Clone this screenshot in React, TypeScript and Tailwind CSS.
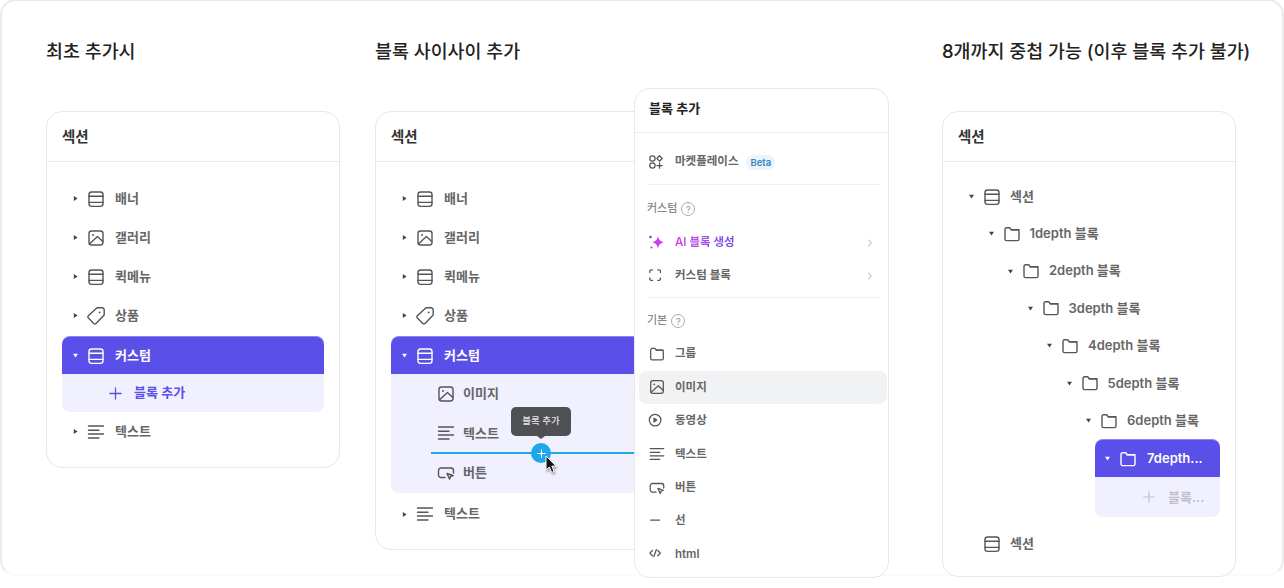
import type { ReactNode } from "react";
import { ChevronRight, Plus } from "lucide-react";

const FONT = "font-['Inter','Noto_Sans_CJK_KR',sans-serif]";

const Caret = ({ open, white }: { open?: boolean; white?: boolean }) => (
  <svg width="5" height="5" viewBox="0 0 6 6" className={white ? "fill-white" : "fill-[#444]"}>
    {open ? <path d="M0 1h6L3 5.5z" /> : <path d="M1 0v6l4.5-3z" />}
  </svg>
);

const Ico = ({ children, size = 18, className = "" }: { children: ReactNode; size?: number; className?: string }) => (
  <svg width={size} height={size} viewBox="0 0 18 18" fill="none" stroke="currentColor" strokeWidth="1.4" strokeLinecap="round" strokeLinejoin="round" className={`shrink-0 ${className}`}>
    {children}
  </svg>
);

const BannerIcon = () => (
  <Ico>
    <rect x="2" y="2" width="14" height="14.4" rx="2.6" />
    <path d="M2 6.2h14M2 12.4h14" />
  </Ico>
);
const ImageIcon = () => (
  <Ico>
    <rect x="2" y="2" width="14" height="14" rx="2.4" />
    <circle cx="6" cy="6" r="1" fill="currentColor" stroke="none" />
    <path d="M2.4 15l8-7.4 5.4 5" />
  </Ico>
);
const TagIcon = () => (
  <Ico>
    <path d="M10 .8h5.2A2 2 0 0 1 17.2 2.8V8L9 16.4a1.6 1.6 0 0 1-2.2 0L1.4 11a1.6 1.6 0 0 1 0-2.2z" />
    <circle cx="12.6" cy="5.4" r=".9" fill="currentColor" stroke="none" />
  </Ico>
);
const TextIcon = () => (
  <Ico>
    <path d="M1.5 3h15M1.5 7.2h10.5M1.5 11h15M1.5 15h10.5" />
  </Ico>
);
const ButtonIcon = () => (
  <Ico>
    <path d="M8 13.5H4a2.5 2.5 0 0 1-2.5-2.5V6.5A2.5 2.5 0 0 1 4 4h10a2.5 2.5 0 0 1 2.5 2.5V9" />
    <path d="M10 9.5l6 2-2.4 1-1 2.6z" />
  </Ico>
);
const FolderIcon = () => (
  <Ico>
    <path d="M2 14V4.4A1.6 1.6 0 0 1 3.6 2.8h2.6c.6 0 1 .3 1.3.8l.7 1.2h6.2A1.6 1.6 0 0 1 16 6.4V14a1.6 1.6 0 0 1-1.6 1.6H3.6A1.6 1.6 0 0 1 2 14z" />
    <path d="M8.2 4.8H16" />
  </Ico>
);

const Row = ({ icon, label, className = "" }: { icon: ReactNode; label: string; className?: string }) => (
  <div className={`flex h-[39px] items-center pl-[11px] text-[13px] font-semibold text-[#666] ${className}`}>
    <Caret />
    <span className="ml-[9px] flex w-[25px] text-[#555]">{icon}</span>
    <span className="ml-[3px]">{label}</span>
  </div>
);

const Card = ({ children, className = "" }: { children: ReactNode; className?: string }) => (
  <div className={`flex w-[294px] flex-col rounded-2xl border border-[#e8e8e8] bg-white ${className}`}>
    <div className="flex h-[50px] shrink-0 items-center border-b border-[#e8e8e8] px-[15px] text-[14.5px] font-semibold text-[#333]">섹션</div>
    {children}
  </div>
);

const ActiveRow = ({ label }: { label: string }) => (
  <div className="mt-[1px] flex h-[38px] items-center rounded-t-lg border-t border-[#8f84f5] bg-[#5b4fe9] pl-[11px] text-[13px] font-semibold text-white">
    <Caret open white />
    <span className="ml-[9px] flex w-[25px]"><BannerIcon /></span>
    <span className="ml-[3px]">{label}</span>
  </div>
);

const ChildRow = ({ icon, label }: { icon: ReactNode; label: string }) => (
  <div className="flex h-[39.5px] items-center pl-[46px] text-[13px] font-semibold text-[#666]">
    <span className="flex w-[26px] text-[#555]">{icon}</span>
    {label}
  </div>
);

const DepthRow = ({ depth }: { depth: number }) => (
  <div className="flex h-[37.4px] items-center text-[13px] font-semibold text-[#666]">
    <span className="shrink-0" style={{ width: depth * 19.5 }} />
    <Caret open />
    <span className="ml-[9px] flex w-[25px] text-[#555]"><FolderIcon /></span>
    <span className="ml-[2px] whitespace-nowrap">{depth}depth 블록</span>
  </div>
);

const Help = () => (
  <span className="ml-1 flex h-[14px] w-[14px] items-center justify-center rounded-full border border-[#aaa] text-[9px] font-medium text-[#999]">?</span>
);

const MenuRow = ({ icon, label, active, arrow, className = "h-[33.4px]" }: { icon: ReactNode; label: string; active?: boolean; arrow?: boolean; className?: string }) => (
  <div className={`flex items-center rounded-lg pl-[9px] pr-[11px] text-[11.5px] font-semibold ${active ? "bg-[#f1f2f4]" : ""} text-[#666] ${className}`}>
    <span className="flex w-[27px] text-[#555]">{icon}</span>
    <span>{label}</span>
    {arrow && <ChevronRight size={12} className="ml-auto text-[#aaa]" />}
  </div>
);

const Menu = () => (
  <div className="absolute left-[634px] top-[88px] flex h-[490px] w-[255px] flex-col rounded-2xl border border-[#e8e8e8] bg-white">
    <div className="flex h-[44px] shrink-0 items-center border-b border-[#f0f0f0] px-[14px] pb-[4px] text-[13px] font-semibold text-[#222]">블록 추가</div>
    <div className="ml-[4px] mr-[1px] flex flex-col">
      <div className="ml-[9px] mr-[7px] flex h-[52px] items-center border-b border-[#f0f0f0] pt-[7px] text-[11.5px] font-semibold text-[#666]">
        <span className="flex w-[27px] text-[#555]">
          <Ico size={16}>
            <circle cx="5" cy="5" r="3" />
            <path d="M13 2l3 3-3 3-3-3z" />
            <circle cx="5" cy="13" r="3" />
            <path d="M13 10v6M10 13h6" />
          </Ico>
        </span>
        마켓플레이스
        <span className="ml-2 rounded-full bg-[#eaf4fc] px-[4px] py-[1px] text-[9.5px] font-semibold leading-[13px] text-[#3d82b8]">Beta</span>
      </div>
      <div className="ml-[8px] flex h-[41.3px] items-end pb-[10px] text-[11px] font-medium text-[#888]">커스텀<Help /></div>
      <div className="flex h-[33px] items-center pl-[9px] pr-[11px] text-[11.5px] font-semibold">
        <span className="flex w-[27px]">
          <svg width="17" height="17" viewBox="0 0 17 17">
            <path d="M10 2c.7 3.6 2 5 5.6 6.2C12 9.400 10.700 10.800 10 14.400 9.300 10.800 8 9.400 4.400 8.200 8 7 9.300 5.600 10 2z" fill="#cb3fe6" />
            <circle cx="2.500" cy="3" r="1.300" fill="#5b4fe9" />
            <circle cx="3.500" cy="13.500" r="1.100" fill="#9a3fe6" />
          </svg>
        </span>
        <span className="bg-gradient-to-r from-[#d63fe6] to-[#6a4fe9] bg-clip-text text-transparent">AI 블록 생성</span>
        <ChevronRight size={12} className="ml-auto text-[#aaa]" />
      </div>
      <MenuRow
        arrow
        label="커스텀 블록"
        className="h-[33px]"
        icon={
          <Ico size={16}>
            <path d="M2 5V3.600A1.600 1.600 0 0 1 3.600 2H5M11 2h1.400A1.600 1.600 0 0 1 14 3.600V5M14 11v1.400a1.600 1.600 0 0 1-1.600 1.600H11M5 14H3.600A1.600 1.600 0 0 1 2 12.400V11" />
          </Ico>
        }
      />
      <div className="ml-[9px] mr-[7px] mt-[5px] border-b border-[#f0f0f0]" />
      <div className="ml-[8px] flex h-[39px] items-end pb-[9px] text-[11px] font-medium text-[#888]">기본<Help /></div>
      <MenuRow label="그룹" icon={<span className="flex scale-90"><FolderIcon /></span>} />
      <MenuRow label="이미지" active icon={<span className="flex scale-90"><ImageIcon /></span>} />
      <MenuRow
        label="동영상"
        icon={
          <Ico size={16}>
            <circle cx="8" cy="8" r="6.500" />
            <path d="M6.800 5.800l3 2.200-3 2.200z" fill="currentColor" />
          </Ico>
        }
      />
      <MenuRow label="텍스트" icon={<span className="flex scale-90"><TextIcon /></span>} />
      <MenuRow label="버튼" icon={<span className="flex scale-90"><ButtonIcon /></span>} />
      <MenuRow
        label="선"
        icon={
          <Ico size={16}>
            <path d="M3 8h10" />
          </Ico>
        }
      />
      <MenuRow
        label="html"
        icon={
          <Ico size={16}>
            <path d="M5 5L2 8l3 3M11 5l3 3-3 3M9.400 4L6.600 12" />
          </Ico>
        }
      />
    </div>
  </div>
);

const Cursor = () => (
  <svg width="14" height="20" viewBox="0 0 14 20" className="absolute left-[545px] top-[455px] drop-shadow-[1px_2px_1px_rgba(0,0,0,0.35)]">
    <path d="M1 1v14l3.400-3 2.300 5.400 2.400-1-2.300-5.300H11z" fill="#111" stroke="#fff" strokeWidth="1" />
  </svg>
);

export default function App() {
  return (
    <div className={`relative h-[588px] w-[1284px] overflow-hidden bg-white ${FONT}`}>
      <div className="absolute bottom-[12px] left-0 right-0 top-[-1px] rounded-2xl border-2 border-[#ebebeb] border-b-[#fafafa]" />
      <div className="relative flex pl-[46px] pt-[39px]">
        <section className="w-[329px]">
          <h2 className="mb-[48px] h-[24px] text-[18.4px] font-medium leading-6 text-[#222]">최초 추가시</h2>
          <Card className="h-[357px]">
            <div className="flex flex-col px-[15px] pt-[17px]">
              <Row icon={<BannerIcon />} label="배너" />
              <Row icon={<ImageIcon />} label="갤러리" />
              <Row icon={<BannerIcon />} label="퀵메뉴" />
              <Row icon={<TagIcon />} label="상품" />
              <ActiveRow label="커스텀" />
              <div className="flex h-[38px] items-center rounded-b-lg bg-[#f1f0fe] pl-[44px] text-[13px] font-semibold text-[#5b4fe9]">
                <Plus size={19} strokeWidth={1.6} className="mr-[9px]" />
                블록 추가
              </div>
              <Row icon={<TextIcon />} label="텍스트" />
            </div>
          </Card>
        </section>

        <section className="w-[567px]">
          <h2 className="mb-[48px] h-[24px] text-[18.4px] font-medium leading-6 text-[#222]">블록 사이사이 추가</h2>
          <Card className="h-[439px]">
            <div className="flex flex-col px-[15px] pt-[17px]">
              <Row icon={<BannerIcon />} label="배너" />
              <Row icon={<ImageIcon />} label="갤러리" />
              <Row icon={<BannerIcon />} label="퀵메뉴" />
              <Row icon={<TagIcon />} label="상품" />
              <ActiveRow label="커스텀" />
              <div className="rounded-b-lg bg-[#f1f0fe]">
                <ChildRow icon={<ImageIcon />} label="이미지" />
                <ChildRow icon={<TextIcon />} label="텍스트" />
                <ChildRow icon={<ButtonIcon />} label="버튼" />
              </div>
              <Row icon={<TextIcon />} label="텍스트" className="mt-[2px]" />
            </div>
          </Card>
        </section>

        <section className="w-[320px]">
          <h2 className="mb-[48px] h-[24px] whitespace-nowrap text-[18.4px] font-medium leading-6 text-[#222]">8개까지 중첩 가능 (이후 블록 추가 불가)</h2>
          <Card className="h-[466px]">
            <div className="flex flex-col px-[15px] pt-[16px]">
              <div className="flex h-[37px] items-center pl-[11px] text-[13px] font-semibold text-[#666]">
                <Caret open />
                <span className="ml-[9px] flex w-[25px] text-[#555]"><BannerIcon /></span>
                <span className="ml-[2px]">섹션</span>
              </div>
              {[1, 2, 3, 4, 5, 6].map((d) => (
                <div key={d} className="pl-[11px]">
                  <DepthRow depth={d} />
                </div>
              ))}
              <div className="ml-[137px] flex flex-col">
                <div className="flex h-[38px] items-center rounded-t-lg border-t border-[#8f84f5] bg-[#5b4fe9] pl-[10px] text-[13px] font-semibold text-white">
                  <Caret open white />
                  <span className="ml-[9px] flex w-[26px]"><FolderIcon /></span>
                  <span className="ml-[2px]">7depth...</span>
                </div>
                <div className="flex h-[40px] items-center rounded-b-lg bg-[#f1f0fe] pl-[45px] text-[13px] font-semibold text-[#c0c0c8]">
                  <Plus size={18} strokeWidth={1.6} className="mr-[10px]" />
                  블록...
                </div>
              </div>
              <div className="mt-[7px] flex h-[39px] items-center pl-[25px] text-[13px] font-semibold text-[#666]">
                <span className="flex w-[25px] text-[#555]"><BannerIcon /></span>
                <span className="ml-[2px]">섹션</span>
              </div>
            </div>
          </Card>
        </section>
      </div>

      {/* insert line + tooltip over the second card */}
      <div className="absolute left-[431px] top-[452px] h-[2px] w-[210px] bg-[#1ea7ea]" />
      <div className="absolute left-[531px] top-[443px] flex h-5 w-5 items-center justify-center rounded-full bg-[#1ea7ea] text-white">
        <Plus size={13} />
      </div>
      <div className="absolute left-[511px] top-[407px] flex h-[29px] w-[60px] items-center justify-center rounded-[5px] bg-[#4f5054] text-[9.5px] font-medium text-[#e4e4e4]">블록 추가</div>
      <div className="absolute left-[537px] top-[436px] h-0 w-0 border-x-[4px] border-t-[3px] border-x-transparent border-t-[#4f5054]" />
      <Cursor />
      <Menu />
    </div>
  );
}
